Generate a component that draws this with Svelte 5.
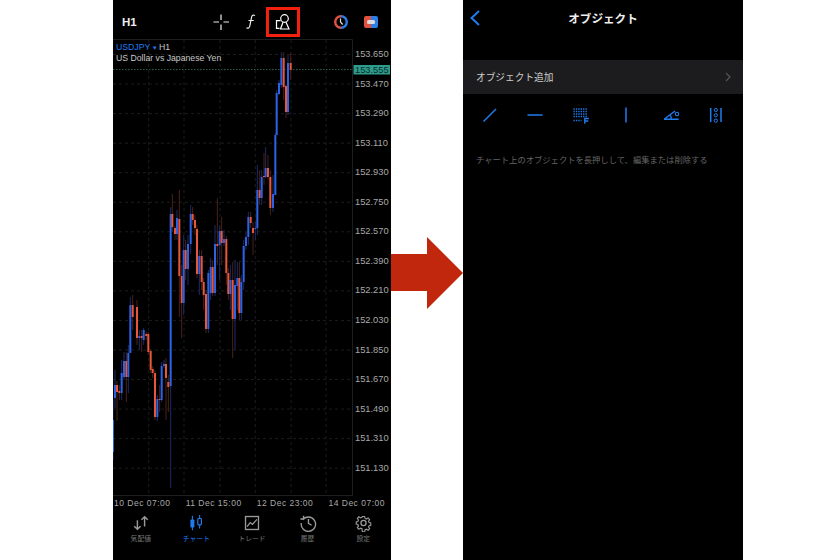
<script>
  // candles: [x offset (3x crop px), open y, close y, colour, wick top, wick bottom]
  const b = "#2b62e6";
  const r = "#e8573a";
  const candles = [
    [0,420,452,b,400,460],[6,385,398,b,370,408],[12,385,392,r,381,421],[19,391,393,r,385,400],
    [26,373,393,b,360,400],[33,361,377,b,352,380],[40,361,377,r,352,402],[46,353,377,b,345,393],
    [52,305,353,b,297,353],[59,305,317,r,295,330],[72,307,338,r,300,345],[79,336,338,b,330,350],
    [86,336,338,r,330,352],[92,330,340,b,328,345],[100,334,336,r,332,340],[106,334,352,r,332,355],
    [113,351,370,r,349,373],[119,369,373,r,366,378],[126,373,417,r,370,420],[133,399,417,b,395,421],
    [140,399,400,r,385,412],[146,366,400,b,362,402],[153,364,366,b,360,368],[159,364,378,r,358,420],
    [166,382,387,r,375,412],[173,214,386,b,207,488],[178,214,227,r,194,232],[186,228,234,r,226,240],
    [192,218,234,b,210,240],[199,219,276,r,190,317],[206,276,303,r,265,338],[212,250,303,b,235,315],
    [218,250,269,r,240,280],[225,244,269,b,235,285],[233,214,244,b,205,254],[239,214,220,r,207,225],
    [246,220,228,r,215,235],[252,229,274,r,225,278],[259,256,274,b,250,295],[266,256,282,r,250,290],
    [272,282,295,r,278,310],[279,294,329,r,290,333],[286,273,329,b,270,333],[293,267,293,b,258,300],
    [299,267,293,r,260,296],[306,244,293,b,225,296],[313,244,246,r,198,265],[320,231,245,b,225,280],
    [326,231,243,r,217,265],[333,239,243,b,230,246],[340,239,273,r,236,285],[346,273,294,r,268,300],
    [352,280,294,b,265,310],[359,280,319,r,262,358],[366,285,319,b,260,350],[373,278,286,b,262,310],
    [379,278,313,r,262,320],[385,282,313,b,275,320],[392,246,282,b,240,290],[399,237,246,b,232,250],
    [406,217,237,b,212,245],[413,217,223,r,212,228],[420,228,233,r,222,255],[427,228,229,b,222,240],
    [433,190,228,b,165,235],[440,190,198,r,170,205],[446,177,198,b,170,205],[453,176,177,r,153,185],
    [458,168,177,b,147,178],[465,168,177,r,155,180],[472,177,208,r,170,215],[480,194,208,b,175,212],
    [487,135,195,b,133,195],[491,93,135,b,90,135],[498,83,94,b,80,95],[505,58,85,b,52,88],
    [512,58,87,r,52,100],[519,86,112,r,84,118],[525,63,112,b,55,115],[533,63,70,r,53,80]
  ];

  const prices = ["153.650","153.470","153.290","153.110","152.930","152.750","152.570","152.390",
    "152.210","152.030","151.850","151.670","151.490","151.310","151.130"];
  const gridX = [148.7, 184, 220, 255.3, 291, 326];
  const priceY = (i) => 54.5 + i * 29.55;
  const cx = (z) => 113 + z / 3;
</script>

<div class="page">
  <section class="phone left">
    <header class="toolbar">
      <span class="tf">H1</span>
      <svg class="ic cross" viewBox="0 0 20 20" width="20" height="20">
        <path d="M2.500 10h5.500M12.500 10h5.500M10 2.500v5.500M10 12.500v5.500" stroke="#eee" stroke-width="1.200" fill="none" />
      </svg>
      <svg class="ic fn" viewBox="0 0 14 18" width="14" height="18">
        <path d="M11 2.500c-1.600-.9-3-.3-3.400 1.600L5.800 13c-.4 2-1.800 2.600-3.300 1.700M4.500 7.500h5.300" stroke="#eee" stroke-width="1.200" fill="none" />
      </svg>
      <div class="objbtn">
        <svg viewBox="0 0 22 22" width="22" height="22">
          <circle cx="12.500" cy="7.500" r="3.800" stroke="#fff" stroke-width="1.200" fill="none" />
          <path d="M11 11.300 8.500 18h8.500L14 11.300" stroke="#fff" stroke-width="1.200" fill="none" />
          <path d="M8.500 9.700H4.500v7.600H7.500" stroke="#fff" stroke-width="1.200" fill="none" />
        </svg>
      </div>
      <svg class="ic clock" viewBox="0 0 16 16" width="16" height="16">
        <path d="M8 2.200a5.800 5.800 0 0 0 0 11.600" stroke="#e2503f" stroke-width="2.400" fill="none" />
        <path d="M8 2.200a5.800 5.800 0 0 1 0 11.600" stroke="#2d7fe6" stroke-width="2.400" fill="none" />
        <path d="M7.500 4.500V8l2.200 2.500" stroke="#ddd" stroke-width="1.200" fill="none" />
      </svg>
      <svg class="ic acct" viewBox="0 0 16 14" width="16" height="14">
        <path d="M3 1h5v12H3a2 2 0 0 1-2-2V3a2 2 0 0 1 2-2z" fill="#e2503f" />
        <path d="M8 1h5a2 2 0 0 1 2 2v8a2 2 0 0 1-2 2H8z" fill="#2d7fe6" />
        <rect x="4" y="5" width="8" height="4" rx="1.500" fill="#ddd" />
      </svg>
    </header>

    <div class="chart">
      <svg viewBox="113 39 278 457" width="278" height="457">
        <path d="M113 39.500H352.500V495.500H113" stroke="#1c1e20" fill="none" />
        {#each gridX as x}
          <line x1={x} x2={x} y1="40" y2="495" stroke="#1b1c1e" stroke-dasharray="3 3" />
        {/each}
        {#each prices as _, i}
          <line x1="113" x2="352" y1={priceY(i)} y2={priceY(i)} stroke="#1b1c1e" stroke-dasharray="3 3" />
        {/each}
        <line x1="113" x2="352" y1="69.500" y2="69.500" stroke="#2c5a50" stroke-dasharray="1.500 1.500" />
        {#each candles as c}
          <rect x={cx(c[0]) - 0.5} y={c[4]} width="1" height={c[5] - c[4]} fill={c[3] === b ? "#1b2c66" : "#4d2018"} />
        {/each}
        {#each candles as c}
          <rect x={cx(c[0]) - 1} y={c[1]} width="2" height={c[2] - c[1]} fill={c[3]} />
        {/each}
        {#each prices as p, i}
          <text class="price" x="355" y={priceY(i) + 2.500}>{p}</text>
        {/each}
        <rect x="353.500" y="65" width="36.500" height="9.500" fill="#2d9c8c" />
        <text class="price tag" x="355" y="72.800">153.555</text>
      </svg>
      <div class="legend">
        <div class="sym"><span class="pair">USDJPY</span> <span class="caret">▾</span> <span>H1</span></div>
        <div>US Dollar vs Japanese Yen</div>
      </div>
    </div>

    <div class="times">
      <span>10 Dec 07:00</span>
      <span>11 Dec 15:00</span>
      <span>12 Dec 23:00</span>
      <span>14 Dec 07:00</span>
    </div>

    <nav class="tabs">
      <div class="tab">
        <svg viewBox="0 0 20 20" width="18" height="18">
          <path d="M6 7v10M2.500 13.500 6 17l3.500-3.500M14 14V3M10.500 6.500 14 3l3.500 3.500" stroke="#999" stroke-width="1.600" fill="none" />
        </svg>
        <span>気配値</span>
      </div>
      <div class="tab active">
        <svg viewBox="0 0 20 20" width="18" height="18">
          <path d="M6 2v16" stroke="#1f7cf0" stroke-width="1.200" />
          <rect x="3.800" y="6" width="4.400" height="9" rx="1" fill="#1f7cf0" />
          <path d="M14 1v15" stroke="#1f7cf0" stroke-width="1.200" />
          <rect x="12" y="5" width="4" height="7" rx="1" fill="#000" stroke="#1f7cf0" stroke-width="1.300" />
        </svg>
        <span>チャート</span>
      </div>
      <div class="tab">
        <svg viewBox="0 0 20 20" width="18" height="18">
          <rect x="2.800" y="2.800" width="14.400" height="14.400" stroke="#999" stroke-width="1.500" fill="none" />
          <path d="M4.500 14 8 9.500l2.500 2L15.500 6" stroke="#999" stroke-width="1.400" fill="none" />
        </svg>
        <span>トレード</span>
      </div>
      <div class="tab">
        <svg viewBox="0 0 20 20" width="18" height="18">
          <path d="M3.500 6.500A8 8 0 1 1 2 10M1 5.500h3.500V2" stroke="#999" stroke-width="1.500" fill="none" transform="translate(.5 0)" />
          <path d="M10.500 5.500V10.500l3.500 2" stroke="#999" stroke-width="1.500" fill="none" />
        </svg>
        <span>履歴</span>
      </div>
      <div class="tab">
        <svg viewBox="0 0 20 20" width="17" height="18">
          <path d="M8.500 1.500h3l.5 2.500 1.800.8 2.200-1.400 2 2.100-1.400 2.200.8 1.800 2.100.5v3l-2.100.5-.8 1.800 1.400 2.200-2 2.100-2.200-1.400-1.800.8-.5 2.500h-3L8 17.500l-1.800-.8L4 18.100l-2-2.100 1.400-2.200-.8-1.800L.5 11.500v-3l2.100-.5.8-1.800L2 4l2-2.100L6.200 3.300 8 2.500z" transform="translate(1 1) scale(.9)" stroke="#999" stroke-width="1.500" fill="none" />
          <circle cx="10" cy="10" r="3" stroke="#999" stroke-width="1.500" fill="none" />
        </svg>
        <span>設定</span>
      </div>
    </nav>
  </section>

  <svg class="arrow" viewBox="0 0 72 72" width="72" height="72">
    <path d="M0 17H36V0L72 36 36 72V54H0z" fill="#c1270d" />
  </svg>

  <section class="phone right">
    <header class="objhead">
      <svg class="back" viewBox="0 0 10 16" width="10" height="16">
        <path d="M9 1 1.500 8 9 15" stroke="#1f7cf0" stroke-width="2" fill="none" />
      </svg>
      <span>オブジェクト</span>
    </header>

    <div class="addrow">
      <span>オブジェクト追加</span>
      <svg viewBox="0 0 6 10" width="6" height="10">
        <path d="M1 1l4 4-4 4" stroke="#555" stroke-width="1.200" fill="none" />
      </svg>
    </div>

    <div class="objtools">
      <svg viewBox="0 0 20 20" width="20" height="20"><path d="M3.500 16.500 16 4" stroke="#1f7cf0" stroke-width="1.500" /></svg>
      <svg viewBox="0 0 20 20" width="20" height="20"><path d="M2.500 10h15" stroke="#1f7cf0" stroke-width="1.500" /></svg>
      <svg viewBox="0 0 20 20" width="20" height="20">
        <path d="M3.500 4h14M3.500 6.500h14M3.500 9h14M3.500 11.500h14M3.500 15.500h8" stroke="#1f7cf0" stroke-width="1.300" stroke-dasharray="1.300 1.100" fill="none" />
        <path d="M14.800 18.800v-5.300h4M14.800 16h3.500" stroke="#1f7cf0" stroke-width="1.400" fill="none" />
      </svg>
      <svg viewBox="0 0 20 20" width="20" height="20"><path d="M10 2.500v15" stroke="#1f7cf0" stroke-width="1.500" /></svg>
      <svg viewBox="0 0 20 20" width="20" height="20">
        <path d="M3 14.300H17.700M3.500 14 14 6M9 10c1 1 1.300 2.500 1.300 4" stroke="#1f7cf0" stroke-width="1.400" fill="none" />
        <circle cx="16" cy="9" r="1.700" stroke="#1f7cf0" stroke-width="1.100" fill="none" />
      </svg>
      <svg viewBox="0 0 20 20" width="20" height="20">
        <path d="M4.700 3v14M15 3v14" stroke="#1f7cf0" stroke-width="1.500" />
        <circle cx="9.800" cy="5" r="1.600" stroke="#1f7cf0" fill="none" />
        <circle cx="9.800" cy="10.300" r="1.600" stroke="#1f7cf0" fill="none" />
        <circle cx="9.800" cy="15.700" r="1.600" stroke="#1f7cf0" fill="none" />
      </svg>
    </div>

    <p class="hint">チャート上のオブジェクトを長押しして、編集または削除する</p>
  </section>
</div>

<style>
  :global(body) {
    background: #fff;
    font-family: "Liberation Sans", "Noto Sans CJK JP", sans-serif;
  }

  .page {
    display: flex;
    width: 840px;
    height: 560px;
    padding-left: 113px;
    box-sizing: border-box;
    align-items: flex-start;
  }

  .phone {
    background: #000;
    height: 560px;
    display: flex;
    flex-direction: column;
    flex: none;
  }
  .left {
    width: 278px;
  }
  .right {
    width: 280px;
  }

  .arrow {
    flex: none;
    margin-top: 237px;
    display: block;
  }

  .toolbar {
    box-sizing: border-box;
    height: 39px;
    padding-top: 5px;
    display: flex;
    align-items: center;
    flex: none;
  }
  .tf {
    color: #eee;
    font-size: 11.500px;
    font-weight: 700;
    margin-left: 9px;
    width: 89px;
  }
  .ic {
    display: block;
    flex: none;
  }
  .fn {
    margin-left: 13px;
  }
  .objbtn {
    box-sizing: border-box;
    width: 34px;
    height: 30px;
    border: 3px solid #f2200c;
    margin-left: 8px;
    display: flex;
    align-items: center;
    justify-content: center;
  }
  .clock {
    margin-left: 33px;
  }
  .acct {
    margin-left: 14px;
  }

  .chart {
    position: relative;
    height: 457px;
    flex: none;
  }
  .chart svg {
    display: block;
  }
  .price {
    font-size: 9.300px;
    fill: #a8a8a8;
  }
  .tag {
    fill: #0c2f2a;
  }
  .legend {
    position: absolute;
    left: 3px;
    top: 3px;
    color: #c8c8c8;
    font-size: 8.700px;
    line-height: 11px;
  }
  .pair {
    color: #1f7cf0;
  }
  .caret {
    color: #1f7cf0;
    font-size: 7px;
  }

  .times {
    display: flex;
    justify-content: space-between;
    padding: 0 6px 0 1px;
    height: 14px;
    align-items: center;
    color: #a8a8a8;
    font-size: 8.500px;
    letter-spacing: 0.5px;
    flex: none;
  }

  .tabs {
    display: grid;
    grid-template-columns: repeat(5, 1fr);
    margin-top: 4px;
  }
  .tab {
    display: flex;
    flex-direction: column;
    align-items: center;
    gap: 2px;
    color: #777;
    font-size: 6.800px;
    line-height: 10px;
  }
  .tab svg {
    display: block;
  }
  .tab.active {
    color: #1f7cf0;
  }

  .objhead {
    height: 36px;
    flex: none;
    display: flex;
    align-items: center;
    justify-content: center;
    position: relative;
    color: #eee;
    font-size: 11.600px;
    font-weight: 700;
  }
  .back {
    position: absolute;
    left: 7px;
    top: 10px;
  }

  .addrow {
    margin-top: 24px;
    height: 34px;
    flex: none;
    background: #1c1c1e;
    display: flex;
    align-items: center;
    justify-content: space-between;
    padding: 0 12px 0 13px;
    color: #ccc;
    font-size: 9.700px;
  }

  .objtools {
    display: grid;
    grid-template-columns: repeat(6, 1fr);
    justify-items: center;
    padding: 11px 4px 0;
  }
  .objtools svg {
    display: block;
  }

  .hint {
    margin: 30px 0 0 13px;
    color: #666;
    font-size: 8.300px;
    line-height: 11px;
  }
</style>
